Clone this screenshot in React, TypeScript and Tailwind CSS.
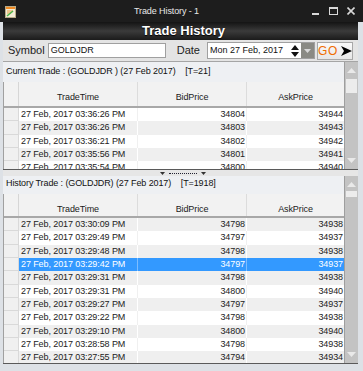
import React from 'react';

type Row = { time: string; bid: string; ask: string; selected?: boolean };

const currentRows: Row[] = [
  { time: '27 Feb, 2017 03:36:26 PM', bid: '34804', ask: '34944' },
  { time: '27 Feb, 2017 03:36:26 PM', bid: '34803', ask: '34943' },
  { time: '27 Feb, 2017 03:36:21 PM', bid: '34802', ask: '34942' },
  { time: '27 Feb, 2017 03:35:56 PM', bid: '34801', ask: '34941' },
  { time: '27 Feb, 2017 03:35:54 PM', bid: '34800', ask: '34940' },
];

const historyRows: Row[] = [
  { time: '27 Feb, 2017 03:30:09 PM', bid: '34798', ask: '34938' },
  { time: '27 Feb, 2017 03:29:49 PM', bid: '34797', ask: '34937' },
  { time: '27 Feb, 2017 03:29:48 PM', bid: '34798', ask: '34938' },
  { time: '27 Feb, 2017 03:29:42 PM', bid: '34797', ask: '34937', selected: true },
  { time: '27 Feb, 2017 03:29:31 PM', bid: '34798', ask: '34938' },
  { time: '27 Feb, 2017 03:29:31 PM', bid: '34800', ask: '34940' },
  { time: '27 Feb, 2017 03:29:27 PM', bid: '34797', ask: '34937' },
  { time: '27 Feb, 2017 03:29:22 PM', bid: '34798', ask: '34938' },
  { time: '27 Feb, 2017 03:29:10 PM', bid: '34800', ask: '34940' },
  { time: '27 Feb, 2017 03:28:58 PM', bid: '34798', ask: '34938' },
  { time: '27 Feb, 2017 03:27:55 PM', bid: '34794', ask: '34934' },
];

function AppIcon() {
  return (
    <svg width="11" height="12" viewBox="0 0 11 12">
      <rect x="0.5" y="0.5" width="10" height="11" fill="#f4ecd6" stroke="#b9ab88" />
      <rect x="1" y="1" width="9" height="2" fill="#f08a24" />
      <path d="M2 5h6M2 7h4" stroke="#e8a048" strokeWidth="1" />
      <path d="M2 10 L8 5" stroke="#4cb34a" strokeWidth="1.6" />
    </svg>
  );
}

function WindowButtons() {
  return (
    <div className="flex items-center gap-[9px] mr-[8px]">
      <svg width="8" height="8" viewBox="0 0 8 8">
        <rect x="0" y="6" width="7" height="2" fill="#d8d8d8" />
      </svg>
      <svg width="9" height="8" viewBox="0 0 9 8">
        <rect x="0.5" y="0.5" width="8" height="7" fill="none" stroke="#d8d8d8" />
        <rect x="0" y="0" width="9" height="2" fill="#d8d8d8" />
      </svg>
      <svg width="8" height="8" viewBox="0 0 8 8">
        <path d="M0.5 0.5 L7.5 7.5 M7.5 0.5 L0.5 7.5" stroke="#d8d8d8" strokeWidth="1.6" />
      </svg>
    </div>
  );
}

function Scrollbar({ thumbTop, thumbHeight }: { thumbTop: number; thumbHeight: number }) {
  return (
    <div className="w-[14px] shrink-0 bg-[#c3c3c3] border-l border-[#9e9e9e] flex flex-col items-center relative">
      <svg width="9" height="5" viewBox="0 0 9 5" className="mt-[6px]">
        <path d="M0 5 L4.5 0 L9 5 Z" fill="#e9e9e9" />
      </svg>
      <div
        className="absolute left-[1px] right-[1px] bg-[#ececec]"
        style={{ top: thumbTop, height: thumbHeight }}
      />
      <div className="flex-1" />
      <svg width="9" height="5" viewBox="0 0 9 5" className="mb-[6px]">
        <path d="M0 0 L4.5 5 L9 0 Z" fill="#e9e9e9" />
      </svg>
    </div>
  );
}

function GridHeader({ height, padTop }: { height: string; padTop: string }) {
  return (
    <div className={`flex ${height} bg-[#f2f2f2] border-b-2 border-[#a8a8a8] text-[#1a1a1a]`}>
      <div className="w-[15px] shrink-0 border-r border-[#d6d6d6]" />
      <div className={`w-[119px] shrink-0 text-center border-r border-[#dcdcdc] ${padTop}`}>TradeTime</div>
      <div className={`w-[109px] shrink-0 text-center border-r border-[#dcdcdc] ${padTop}`}>BidPrice</div>
      <div className={`flex-1 text-center ${padTop}`}>AskPrice</div>
    </div>
  );
}

function GridRows({ rows, firstGray }: { rows: Row[]; firstGray: boolean }) {
  return (
    <div className="flex-1 overflow-hidden">
      {rows.map((r, i) => {
        const gray = firstGray ? i % 2 === 0 : i % 2 === 1;
        const bg = r.selected ? 'bg-[#3399ff] text-white' : gray ? 'bg-[#efefef] text-[#222]' : 'bg-white text-[#222]';
        const sep = r.selected ? 'border-[#7dbdff]' : gray ? 'border-white' : 'border-[#f0f0f0]';
        return (
          <div key={i} className="flex h-[13.33px] leading-[13.33px]">
            <div className="w-[15px] shrink-0 bg-[#f0f0f0] border-r border-b border-[#d9d9d9]" />
            <div className={`flex flex-1 ${bg}`}>
              <div className={`w-[119px] shrink-0 pl-[2px] border-r ${sep} whitespace-nowrap`}>{r.time}</div>
              <div className={`w-[109px] shrink-0 text-right pr-[1px] border-r ${sep}`}>{r.bid}</div>
              <div className="flex-1 text-right pr-[1px]">{r.ask}</div>
            </div>
          </div>
        );
      })}
    </div>
  );
}

export default function App() {
  return (
    <div
      className="w-[363px] h-[371px] flex flex-col bg-[#dde1e6] overflow-hidden text-[9px] tracking-[-0.1px]"
      style={{ fontFamily: '"Liberation Sans", Arial, sans-serif' }}
    >
      {/* TITLE BAR */}
      <div className="h-[22px] shrink-0 bg-[#1d1d1d] flex items-center">
        <div className="ml-[5px] mt-[2px]">
          <AppIcon />
        </div>
        <div className="ml-[118px] text-[#e8e8e8] text-[9px] mt-[1px]">Trade History - 1</div>
        <div className="flex-1" />
        <WindowButtons />
      </div>

      <div className="flex-1 flex flex-col pl-[3px] pr-[5px]">
        {/* HEADER BAR */}
        <div className="h-[18px] shrink-0 bg-gradient-to-b from-[#141414] via-[#3b3b3b] to-[#1b1b1b] flex items-center justify-center">
          <span className="text-white font-bold text-[13px] tracking-normal [text-shadow:0_1px_1px_#000] ml-[6px]">Trade History</span>
        </div>

        {/* SYMBOL / DATE ROW */}
        <div className="h-[22px] shrink-0 bg-[#e4e4e4] border-b border-[#a5a5a5] flex items-center text-[11px] text-[#222] tracking-normal">
          <span className="ml-[5px]">Symbol</span>
          <div className="ml-[3px] w-[118px] h-[15px] bg-white border border-[#a0a0a0] text-[9px] flex items-center pl-[2px] text-[#111]">GOLDJDR</div>
          <span className="ml-[11px]">Date</span>
          <div className="ml-[7px] w-[108px] h-[17px] bg-white border border-[#a0a0a0] flex items-center">
            <span className="text-[9px] pl-[2px] text-[#111] flex-1">Mon 27 Feb, 2017</span>
            <svg width="8" height="12" viewBox="0 0 8 12" className="mr-[2px]">
              <path d="M0 5 L4 0 L8 5 Z M0 7 L4 12 L8 7 Z" fill="#111" />
            </svg>
            <div className="w-[13px] h-full bg-[#8a8a84] flex items-center justify-center">
              <svg width="7" height="4" viewBox="0 0 7 4">
                <path d="M0 0 L3.5 4 L7 0 Z" fill="#d8d8d8" />
              </svg>
            </div>
          </div>
          <div className="ml-[2px] w-[36px] h-[18px] bg-gradient-to-b from-[#fafafa] to-[#e6e6e6] border border-[#a8a8a8] flex items-center justify-center gap-[3px]">
            <span className="text-[#f06c00] text-[12px] tracking-[0.5px]">GO</span>
            <svg width="11" height="10" viewBox="0 0 11 10">
              <path d="M0 0 L11 5 L0 10 L3 5 Z" fill="#000" />
            </svg>
          </div>
        </div>

        {/* CURRENT TRADE PANEL */}
        <div className="h-[108px] shrink-0 flex bg-[#eef0f3] border-b border-[#5a5a5a]">
          <div className="flex-1 flex flex-col">
            <div className="h-[20px] shrink-0 flex items-center pl-[3px] text-[#111]">
              Current Trade : (GOLDJDR ) (27 Feb 2017)&nbsp;&nbsp;&nbsp; [T=21]
            </div>
            <div className="flex-1 flex flex-col border-l border-[#a0a0a0] overflow-hidden">
              <GridHeader height="h-[26px]" padTop="pt-[9px]" />
              <GridRows rows={currentRows} firstGray={false} />
            </div>
          </div>
          <Scrollbar thumbTop={17} thumbHeight={14} />
        </div>

        {/* SPLITTER */}
        <div className="h-[6px] shrink-0 bg-[#e6e6e6] flex items-center justify-center">
          <div className="flex items-center gap-[4px] ml-[4px]">
            <svg width="5" height="3" viewBox="0 0 5 3">
              <path d="M0 0 L2.5 3 L5 0 Z" fill="#333" />
            </svg>
            <div className="w-[28px] h-[1px] border-t border-dotted border-[#223]" />
            <svg width="5" height="3" viewBox="0 0 5 3">
              <path d="M0 0 L2.5 3 L5 0 Z" fill="#333" />
            </svg>
          </div>
        </div>

        {/* HISTORY TRADE PANEL */}
        <div className="h-[188px] shrink-0 flex bg-[#eef0f3] border-b border-[#5a5a5a]">
          <div className="flex-1 flex flex-col">
            <div className="h-[18px] shrink-0 flex items-center pl-[3px] pb-[2px] text-[#111]">
              History Trade : (GOLDJDR) (27 Feb 2017)&nbsp;&nbsp;&nbsp; [T=1918]
            </div>
            <div className="flex-1 flex flex-col border-l border-[#a0a0a0] overflow-hidden">
              <GridHeader height="h-[24px]" padTop="pt-[9px]" />
              <GridRows rows={historyRows} firstGray={true} />
            </div>
          </div>
          <Scrollbar thumbTop={15} thumbHeight={6} />
        </div>
      </div>
    </div>
  );
}
